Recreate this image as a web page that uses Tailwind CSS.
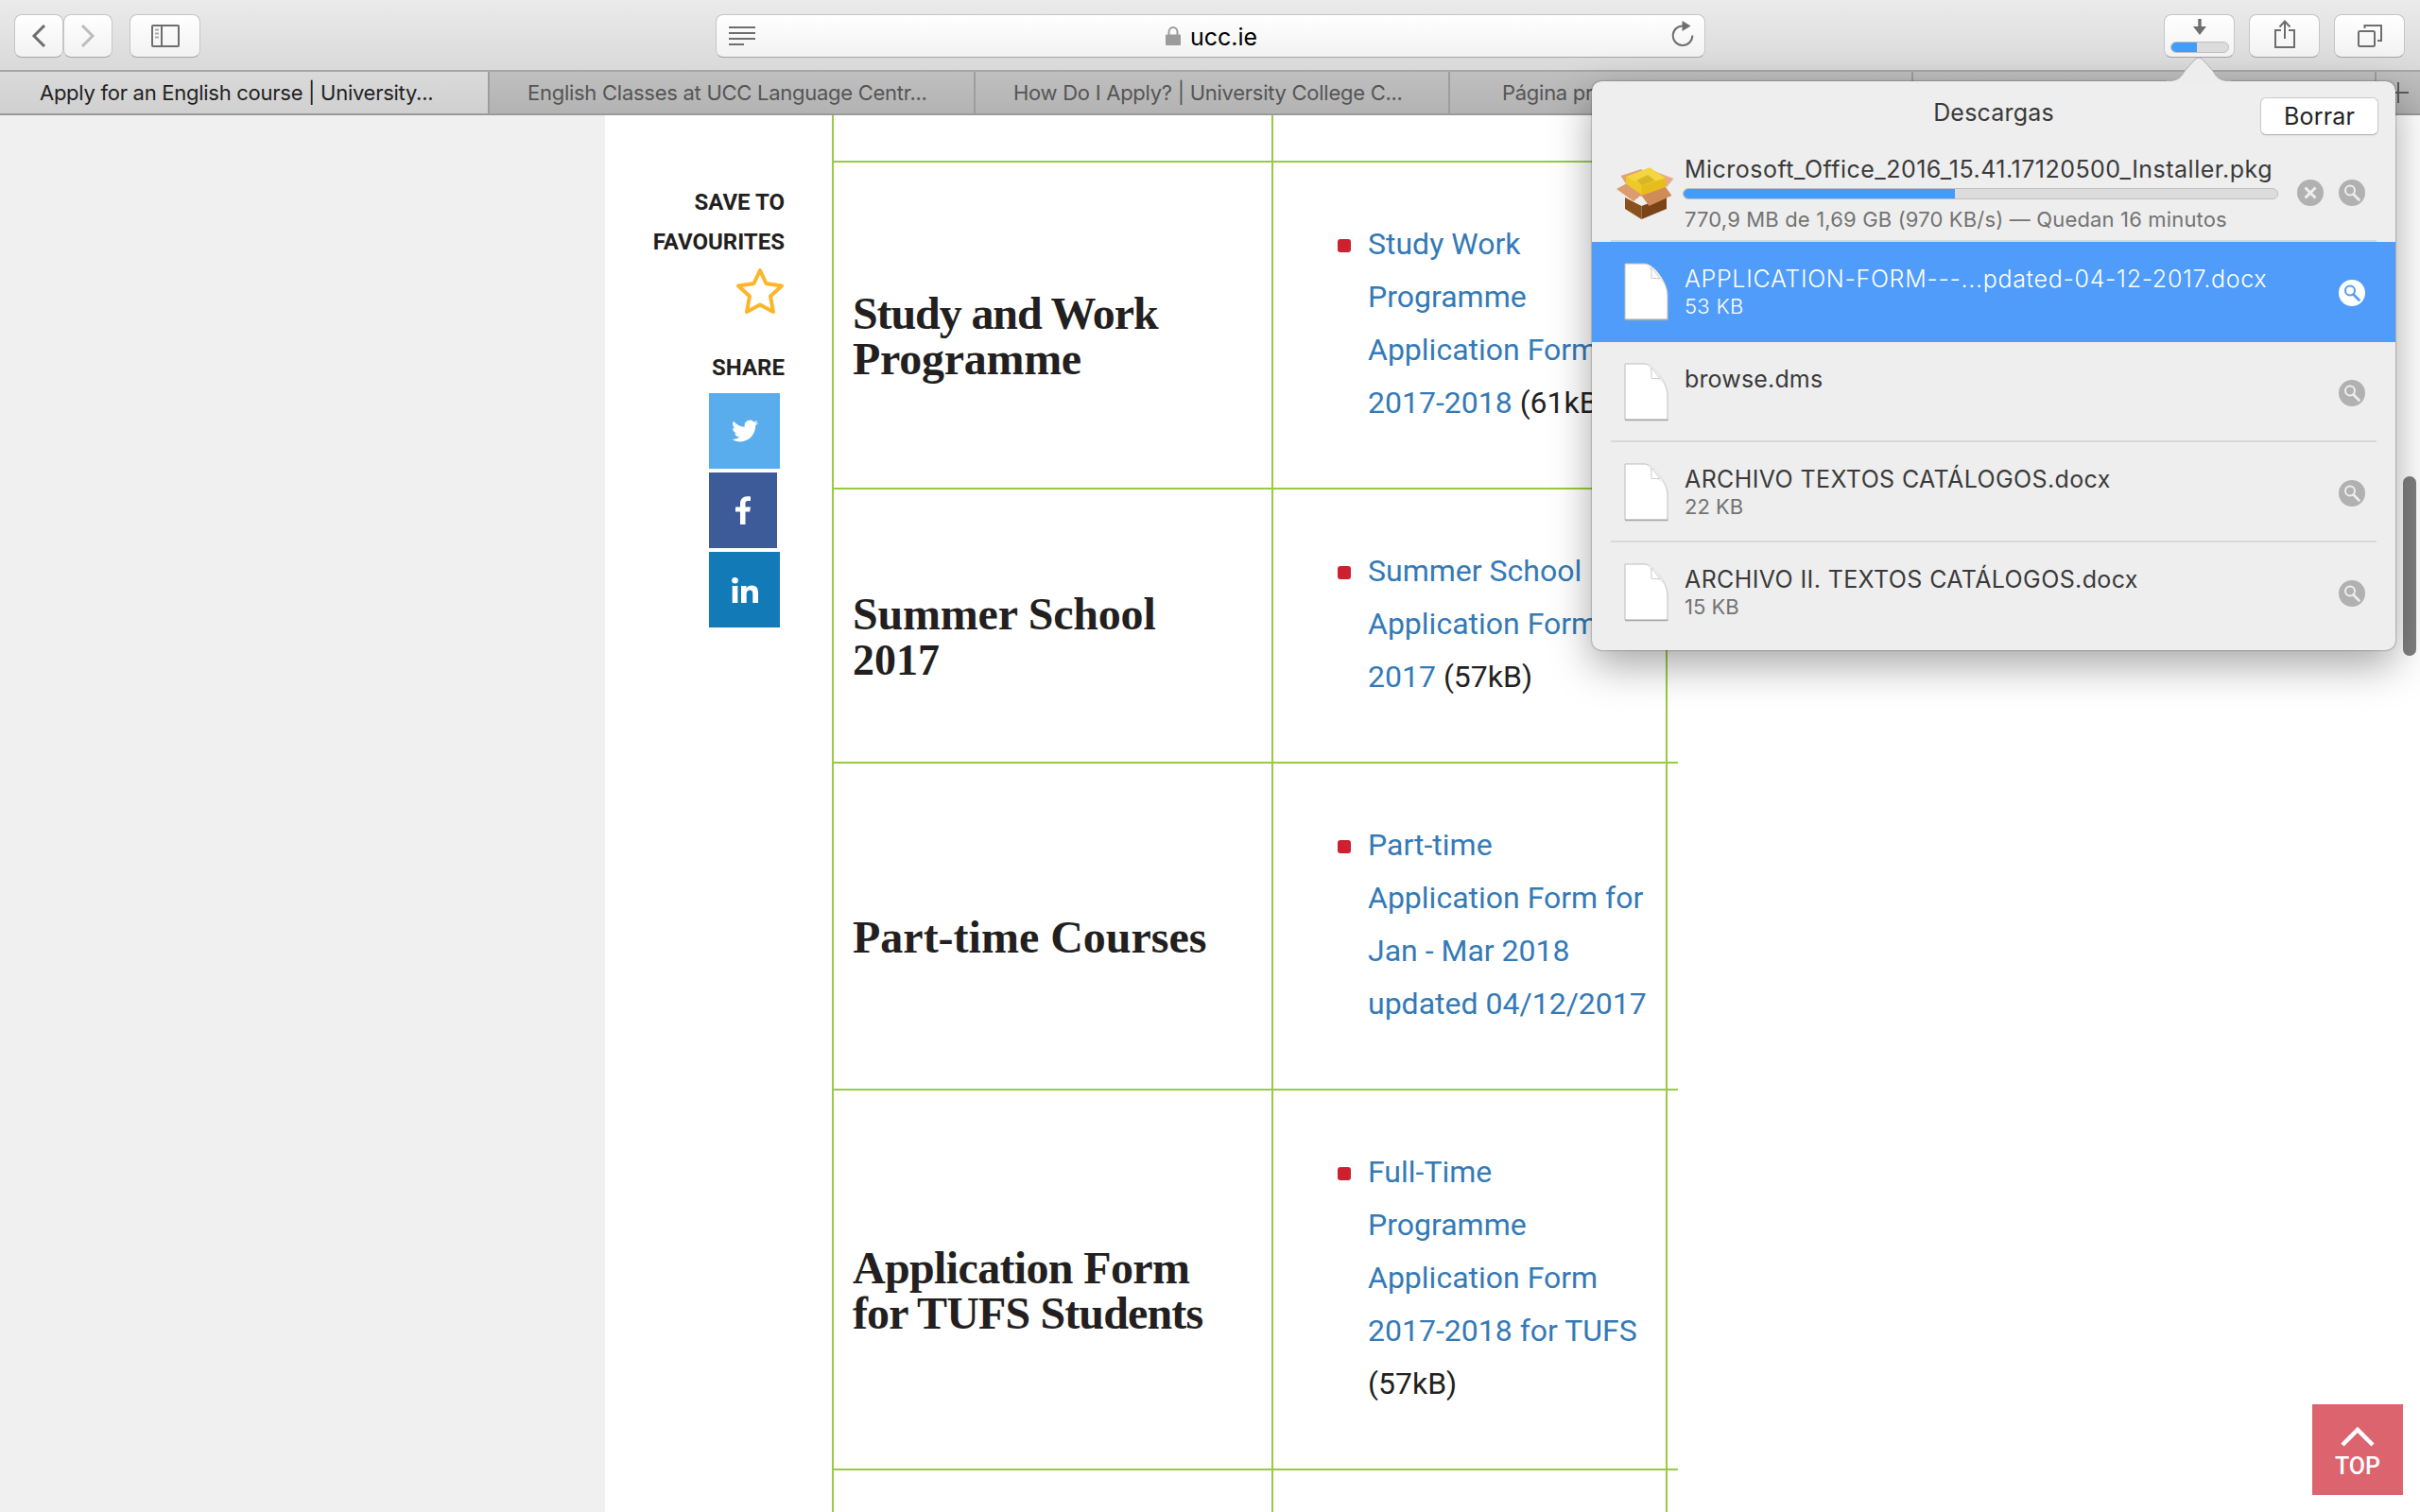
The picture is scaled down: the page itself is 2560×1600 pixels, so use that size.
<!DOCTYPE html>
<html lang="es">
<head>
<meta charset="utf-8">
<title>Apply for an English course | University College Cork</title>
<script src="https://cdn.jsdelivr.net/npm/@tailwindcss/browser@4"></script>
</head>
<body class="relative flex flex-col w-[2560px] h-[1600px] overflow-hidden bg-white font-['Inter',sans-serif] text-[#222]">

<svg class="hidden">
  <symbol id="doc" viewBox="0 0 50 64">
    <path d="M2 2H23C31 2 47 21 47 35V61H2Z" fill="#fff" stroke="#bdbdbd" stroke-width="1"/>
    <path d="M2 61.500H47.500" stroke="#a8a8a8" stroke-width="1.500"/>
    <path d="M24 2.500C28 6 30 10 30 17.500C36 17 43 20 46.500 31C42 14 31 3 24 2.500Z" fill="#f1f1f1"/>
    <path d="M30 6V17.500H39Z" fill="#fff" stroke="#cfcfcf" stroke-width="1"/>
  </symbol>
  <symbol id="lens" viewBox="0 0 28 28">
    <circle cx="14" cy="14" r="14" fill="currentColor"/>
    <circle cx="12" cy="11.500" r="5" fill="none" stroke="var(--g)" stroke-width="2"/>
    <path d="M15.500 15.500L21.500 21.500" stroke="var(--g)" stroke-width="2.600" stroke-linecap="round"/>
  </symbol>
</svg>

<!-- toolbar -->
<header class="flex shrink-0 items-start h-[76px] pt-[15px] border-b-2 border-[#a6a6a6] bg-linear-to-b from-[#ebebeb] to-[#d9d9d9] text-[#6e6e6e]">
  <div class="flex pl-[15px]">
    <button class="flex items-center justify-center w-[52px] h-[46px] rounded-lg border border-[#c6c6c6] border-b-[#a5a5a5] bg-linear-to-b from-white to-[#f2f2f2]">
      <svg class="w-4 h-6" viewBox="0 0 16 24" fill="none" stroke="currentColor" stroke-width="3"><path d="M14 1L3 12L14 23"/></svg>
    </button>
    <button class="flex items-center justify-center w-[52px] h-[46px] rounded-lg border border-[#c6c6c6] border-b-[#a5a5a5] bg-linear-to-b from-white to-[#f2f2f2] text-[#bdbdbd]">
      <svg class="w-4 h-6" viewBox="0 0 16 24" fill="none" stroke="currentColor" stroke-width="3"><path d="M2 1L13 12L2 23"/></svg>
    </button>
    <button class="flex items-center justify-center w-[75px] h-[46px] ml-[18px] rounded-lg border border-[#c6c6c6] border-b-[#a5a5a5] bg-linear-to-b from-white to-[#f2f2f2]">
      <svg class="w-[30px] h-6" viewBox="0 0 30 24" fill="none" stroke="currentColor" stroke-width="2"><rect x="1" y="1" width="28" height="22" rx="1"/><path d="M11 1V23"/><path d="M4 5.500H8M4 9.500H8M4 13.500H8" stroke="#a9a9a9"/></svg>
    </button>
  </div>
  <div class="flex items-center w-[1047px] h-[46px] ml-[545px] rounded-lg border border-[#c6c6c6] border-b-[#a5a5a5] bg-linear-to-b from-white to-[#f2f2f2]">
    <svg class="w-[28px] h-5 ml-[13px]" viewBox="0 0 28 20" stroke="currentColor" stroke-width="2"><path d="M0 1H28M0 7H28M0 13H28M0 19H16"/></svg>
    <svg class="w-4 h-5 ml-[434px]" viewBox="0 0 16 20"><path d="M3.500 9V6A4.500 5 0 0 1 12.500 6V9" fill="none" stroke="#9b9b9b" stroke-width="2"/><rect y="8.500" width="16" height="11.500" rx="1" fill="#9b9b9b"/></svg>
    <span class="ml-[10px] pt-[2px] text-[25px] leading-[30px] text-black whitespace-nowrap">ucc.ie</span>
    <svg class="w-[24px] h-[28px] ml-auto mr-[11px] mb-1" viewBox="0 0 24 28"><path d="M13.500 5.500A10.300 10.300 0 1 0 22.300 15.500" fill="none" stroke="currentColor" stroke-width="2"/><path d="M11.500 0V11L20.500 5.500Z" fill="currentColor"/></svg>
  </div>
  <div class="flex gap-[15px] ml-[485px]">
    <button class="flex flex-col items-center justify-between w-[75px] h-[46px] pt-[4px] pb-[4px] rounded-lg border border-[#c6c6c6] border-b-[#a5a5a5] bg-linear-to-b from-white to-[#f2f2f2]">
      <svg class="w-[14px] h-[17px]" viewBox="0 0 14 17" fill="currentColor"><path d="M5.300 0H8.700V8H14L7 17L0 8H5.300Z"/></svg>
      <span class="flex w-[62px] h-3 overflow-hidden rounded-full border border-[#c0c0c0] bg-[#dcdcdc]"><span class="w-[27px] bg-[#429cfa]"></span></span>
    </button>
    <button class="flex items-center justify-center w-[75px] h-[46px] rounded-lg border border-[#c6c6c6] border-b-[#a5a5a5] bg-linear-to-b from-white to-[#f2f2f2]">
      <svg class="w-[24px] h-[30px] mb-1" viewBox="0 0 24 30" fill="none" stroke="currentColor" stroke-width="2"><path d="M8 11H2V29H22V11H16M12 20V2M6.500 7.500L12 1.500L17.500 7.500"/></svg>
    </button>
    <button class="flex items-center justify-center w-[75px] h-[46px] rounded-lg border border-[#c6c6c6] border-b-[#a5a5a5] bg-linear-to-b from-white to-[#f2f2f2]">
      <svg class="w-[26px] h-6" viewBox="0 0 26 24" fill="none" stroke="currentColor" stroke-width="2"><rect x="1" y="7" width="17" height="16" rx="1.500"/><path d="M7.500 4V1H25V17H21"/></svg>
    </button>
  </div>
</header>

<!-- tab bar -->
<nav class="flex shrink-0 h-[46px] border-b-2 border-[#9a9a9a] bg-linear-to-b from-[#bfbfbf] to-[#b3b3b3] text-[22px] leading-[44px] tracking-[-0.270px] whitespace-nowrap text-[#555]">
  <div class="w-[516px] pl-[42px] bg-linear-to-b from-[#dadada] to-[#d0d0d0] text-[#222]">Apply for an English course | University...</div>
  <div class="w-[514px] pl-[40px] border-l-2 border-[#9d9d9d]">English Classes at UCC Language Centr...</div>
  <div class="w-[502px] pl-[40px] border-l-2 border-[#9d9d9d]">How Do I Apply? | University College C...</div>
  <div class="w-[490px] pl-[55px] border-l-2 border-[#9d9d9d]">Página principal</div>
  <div class="w-[490px] border-l-2 border-[#9d9d9d]"></div>
  <div class="flex flex-1 items-center justify-center border-l-2 border-[#9d9d9d]">
    <svg class="w-[22px] h-[22px]" viewBox="0 0 22 22" stroke="#5c5c5c" stroke-width="2"><path d="M11 0V22M0 11H22"/></svg>
  </div>
</nav>

<!-- page -->
<main class="flex flex-1 min-h-0 font-['Roboto',sans-serif]">
  <div class="w-[640px] bg-[#f0f0f0]"></div>

  <aside class="flex flex-col items-end w-[190px] pt-[71px] text-[24px] leading-[42px] font-bold text-[#231f20] text-right">
    <div>SAVE TO<br>FAVOURITES</div>
    <svg class="w-[52px] h-[52px] mt-[5px]" viewBox="0 0 52 52"><path d="M26 4L32.500 18L49 20.500L37 31.500L40 48L26 40.500L12 48L15 31.500L3 20.500L19.500 18Z" fill="none" stroke="#fdb52b" stroke-width="4" stroke-linejoin="round"/></svg>
    <div class="mt-[34px]">SHARE</div>
    <div class="flex flex-col gap-1 w-[80px] mt-[6px]">
      <div class="flex items-center justify-center w-[75px] h-20 bg-[#5aadec]">
        <svg class="w-[28px] h-[28px]" viewBox="0 0 24 24" fill="#fff"><path d="M23.950 4.570a10 10 0 0 1-2.820.770 4.960 4.960 0 0 0 2.160-2.720c-.950.550-2 .950-3.130 1.180a4.920 4.920 0 0 0-8.380 4.480C7.690 8.090 4.070 6.130 1.640 3.160a4.820 4.820 0 0 0-.670 2.480c0 1.710.870 3.210 2.190 4.100a4.900 4.900 0 0 1-2.230-.620v.060a4.920 4.920 0 0 0 3.950 4.830 5 5 0 0 1-2.210.080 4.940 4.940 0 0 0 4.600 3.420A9.870 9.870 0 0 1 0 19.540a14 14 0 0 0 7.550 2.210c9.050 0 14-7.500 14-13.980 0-.210 0-.420-.010-.630a9.940 9.940 0 0 0 2.410-2.570z"/></svg>
      </div>
      <div class="flex items-center justify-center w-[72px] h-20 bg-[#3d5b99]">
        <svg class="w-[16px] h-[30px]" viewBox="0 0 16 30" fill="#fff"><path d="M5 30V16.500H0V11.500H5V8C5 3 8 .2 12.500.2C14 .2 15.500.4 16 .5V5H13C11 5 10.500 6 10.500 7.500V11.500H16L15.200 16.500H10.500V30Z"/></svg>
      </div>
      <div class="flex items-center justify-center w-[75px] h-20 bg-[#117ab7]">
        <svg class="w-[28px] h-[27px]" viewBox="0 0 28 27" fill="#fff"><circle cx="3.500" cy="3.300" r="3.300"/><path d="M.7 9H6.400V27H.7ZM10 9H15.500V11.500C16.300 10 18.300 8.500 21.200 8.500C27 8.500 28 12.300 28 17V27H22.300V18.200C22.300 16 22.200 13.500 19.300 13.500C16.300 13.500 15.700 15.800 15.700 18V27H10Z"/></svg>
      </div>
    </div>
  </aside>

  <section class="flex flex-col w-[895px] ml-[50px] text-[32px] leading-[56px] text-[#231f20]">
    <div class="flex shrink-0 h-[50px] border-b-2 border-[#98ca42]">
      <div class="w-[465px] border-l-2 border-[#98ca42]"></div><div class="w-[419px] border-x-2 border-[#98ca42]"></div>
    </div>
    <div class="flex shrink-0 h-[346px] border-b-2 border-[#98ca42]">
      <h3 class="flex items-center w-[465px] pl-5 pt-[24px] border-l-2 border-[#98ca42] font-['Liberation_Serif',serif] font-bold text-[48px] leading-[48px] whitespace-nowrap"><span><span class="tracking-[-1.100px]">Study and Work</span><br><span class="tracking-[-0.270px]">Programme</span></span></h3>
      <div class="flex w-[419px] pt-[58px] pl-[68px] gap-[18px] border-x-2 border-[#98ca42] whitespace-nowrap">
        <i class="w-[14px] h-[14px] mt-[23px] rounded-[3px] bg-[#cd2031]"></i>
        <p class="text-[#337ab7]">Study Work<br>Programme<br>Application Form<br>2017-2018 <span class="text-[#231f20]">(61kB)</span></p>
      </div>
    </div>
    <div class="flex shrink-0 h-[290px] border-b-2 border-[#98ca42]">
      <h3 class="flex items-center w-[465px] pl-5 pt-[24px] border-l-2 border-[#98ca42] font-['Liberation_Serif',serif] font-bold text-[48px] leading-[48px] whitespace-nowrap"><span><span class="tracking-[-0.200px]">Summer School</span><br><span class="text-[46px]">2017</span></span></h3>
      <div class="flex w-[419px] pt-[58px] pl-[68px] gap-[18px] border-x-2 border-[#98ca42] whitespace-nowrap">
        <i class="w-[14px] h-[14px] mt-[23px] rounded-[3px] bg-[#cd2031]"></i>
        <p class="text-[#337ab7]">Summer School<br>Application Form<br>2017 <span class="text-[#231f20]">(57kB)</span></p>
      </div>
    </div>
    <div class="flex shrink-0 h-[346px] border-b-2 border-[#98ca42]">
      <h3 class="flex items-center w-[465px] pl-5 pt-[24px] border-l-2 border-[#98ca42] font-['Liberation_Serif',serif] font-bold text-[48px] leading-[48px] whitespace-nowrap">Part-time Courses</h3>
      <div class="flex w-[419px] pt-[58px] pl-[68px] gap-[18px] border-x-2 border-[#98ca42] whitespace-nowrap">
        <i class="w-[14px] h-[14px] mt-[23px] rounded-[3px] bg-[#cd2031]"></i>
        <p class="text-[#337ab7]">Part-time<br>Application Form for<br>Jan - Mar 2018<br>updated 04/12/2017</p>
      </div>
    </div>
    <div class="flex shrink-0 h-[402px] border-b-2 border-[#98ca42]">
      <h3 class="flex items-center w-[465px] pl-5 pt-[23px] border-l-2 border-[#98ca42] font-['Liberation_Serif',serif] font-bold text-[48px] leading-[48px] whitespace-nowrap"><span><span class="tracking-[-0.650px]">Application Form</span><br><span class="tracking-[-0.870px]">for TUFS Students</span></span></h3>
      <div class="flex w-[419px] pt-[58px] pl-[68px] gap-[18px] border-x-2 border-[#98ca42] whitespace-nowrap">
        <i class="w-[14px] h-[14px] mt-[23px] rounded-[3px] bg-[#cd2031]"></i>
        <p class="text-[#337ab7]">Full-Time<br>Programme<br>Application Form<br>2017-2018 for TUFS<br><span class="text-[#231f20]">(57kB)</span></p>
      </div>
    </div>
    <div class="flex shrink-0 h-[44px]">
      <div class="w-[465px] border-l-2 border-[#98ca42]"></div><div class="w-[419px] border-x-2 border-[#98ca42]"></div>
    </div>
  </section>
</main>

<!-- scrollbar -->
<div class="absolute left-[2542px] top-[504px] w-[14px] h-[190px] rounded-full bg-[#7f7f7f]"></div>

<!-- back to top -->
<a class="absolute left-[2446px] top-[1486px] flex flex-col items-center w-24 h-24 pt-[23px] bg-[#dc646e] font-['Roboto',sans-serif] text-[25px] leading-[30px] font-medium text-white">
  <svg class="w-[38px] h-[24px]" viewBox="0 0 38 24" fill="none" stroke="#fff" stroke-width="4.500"><path d="M3 20L19 4L35 20"/></svg>
  <span class="mt-[4px]">TOP</span>
</a>

<!-- downloads popover -->
<div class="absolute left-[1684px] top-[86px] flex flex-col w-[850px] h-[602px] rounded-[10px] bg-[#eeeeee] text-[25px] leading-[30px] text-[#3a3a3a] whitespace-nowrap shadow-[0_0_2px_rgba(0,0,0,0.6),0_16px_44px_rgba(0,0,0,0.35)]">
  <svg class="absolute left-[608px] top-[-26px] w-[68px] h-[27px]" viewBox="0 0 68 27"><path d="M0 26C14 26 15 21 20 14L30 3C32.500 .5 35.500 .5 38 3L48 14C53 21 54 26 68 26V27H0Z" fill="#ededed"/><path d="M0 25.500C14 25.500 15 21 20 14L30 3C32.500 .5 35.500 .5 38 3L48 14C53 21 54 25.500 68 25.500" fill="none" stroke="#b0b0b0" stroke-width="1"/></svg>
  <div class="relative flex justify-center h-[64px] pt-[18px]">
    <span class="tracking-[0.200px]">Descargas</span>
    <button class="absolute right-[18px] top-[17px] w-[125px] h-[40px] rounded-[6px] border border-[#cacaca] border-b-[#b0b0b0] bg-white text-[#222] tracking-[0.200px] shadow-xs">Borrar</button>
  </div>
  <div class="flex h-[104px] pl-[22px]">
    <svg class="w-[70px] h-[66px] mt-[22px]" viewBox="17 12 70 66" stroke-linejoin="round">
      <path d="M30 49L47.500 58V72L30 61Z" fill="#8a501e"/><path d="M47.500 58L74 48V61L47.500 72Z" fill="#7a4318"/>
      <path d="M25.500 26L47 19L73 40L47 48L32 36Z" fill="#e0a27a"/><path d="M58 20L81.500 29L74 38L70 34Z" fill="#e8ab86"/>
      <path d="M31 27L56 17.500L73 28.500V39L47.500 47L31 37Z" fill="#e7bd1d"/>
      <path d="M31 27L56 17.500L73 28.500L47.500 36Z" fill="#f3d640"/><path d="M42 31L54 25L62 31L47.500 36Z" fill="#d8b625"/><path d="M31 27L47.500 36V47L31 37Z" fill="#efc829"/>
      <path d="M31 34.500L47.500 46L39 53L21 40Z" fill="#dc9c70"/><path d="M47.500 47L73 38L79.500 47L55.500 58Z" fill="#cf8c59"/>
    </svg>
    <div class="flex flex-col w-[632px] pt-[14px]">
      <span class="self-start ml-[6px] tracking-[0.480px]">Microsoft_Office_2016_15.41.17120500_Installer.pkg</span>
      <span class="flex w-[630px] h-3 mt-[5px] ml-1 overflow-hidden rounded-full border border-[#c0c0c0] bg-[#dcdcdc]"><span class="w-[287px] bg-[#429cfa]"></span></span>
      <span class="self-start ml-[6px] mt-[6px] text-[22px] tracking-[0.160px] text-[#737373]">770,9 MB de 1,69 GB (970 KB/s) — Quedan 16 minutos</span>
    </div>
    <svg class="w-7 h-7 mt-10 ml-[22px]" viewBox="0 0 28 28"><circle cx="14" cy="14" r="14" fill="#b1b1b1"/><path d="M8.500 8.500L19.500 19.500M19.500 8.500L8.500 19.500" stroke="#eee" stroke-width="3"/></svg>
    <svg class="w-7 h-7 mt-10 ml-4 text-[#b1b1b1] [--g:#eee]"><use href="#lens"/></svg>
  </div>
  <div class="mx-5 h-[2px] bg-[#d8d8d8]"></div>
  <div class="flex h-[106px] pl-[33px] bg-[#4f9cfa] text-white [--g:#4f9cfa]">
    <svg class="w-[50px] h-[64px] mt-[21px]"><use href="#doc"/></svg>
    <div class="flex flex-col items-start w-[707px] pl-[15px] pt-[24px] font-light"><span class="tracking-[0.700px]">APPLICATION-FORM---...pdated-04-12-2017.docx</span><span class="text-[22px] leading-[28px] tracking-[0.300px]">53 KB</span></div>
    <svg class="w-7 h-7 mt-10"><use href="#lens"/></svg>
  </div>
  <div class="flex h-[104px] pl-[33px]">
    <svg class="w-[50px] h-[64px] mt-[21px]"><use href="#doc"/></svg>
    <div class="flex flex-col items-start w-[707px] pl-[15px] pt-[24px]"><span class="tracking-[0.160px]">browse.dms</span></div>
    <svg class="w-7 h-7 mt-10 text-[#b1b1b1] [--g:#eee]"><use href="#lens"/></svg>
  </div>
  <div class="mx-5 h-[2px] bg-[#d8d8d8]"></div>
  <div class="flex h-[104px] pl-[33px]">
    <svg class="w-[50px] h-[64px] mt-[21px]"><use href="#doc"/></svg>
    <div class="flex flex-col items-start w-[707px] pl-[15px] pt-[24px]"><span class="tracking-[0.380px]">ARCHIVO TEXTOS CATÁLOGOS.docx</span><span class="text-[22px] leading-[28px] text-[#737373]">22 KB</span></div>
    <svg class="w-7 h-7 mt-10 text-[#b1b1b1] [--g:#eee]"><use href="#lens"/></svg>
  </div>
  <div class="mx-5 h-[2px] bg-[#d8d8d8]"></div>
  <div class="flex h-[104px] pl-[33px]">
    <svg class="w-[50px] h-[64px] mt-[21px]"><use href="#doc"/></svg>
    <div class="flex flex-col items-start w-[707px] pl-[15px] pt-[24px]"><span class="tracking-[0.380px]">ARCHIVO II. TEXTOS CATÁLOGOS.docx</span><span class="text-[22px] leading-[28px] text-[#737373]">15 KB</span></div>
    <svg class="w-7 h-7 mt-10 text-[#b1b1b1] [--g:#eee]"><use href="#lens"/></svg>
  </div>
</div>
</body>
</html>
